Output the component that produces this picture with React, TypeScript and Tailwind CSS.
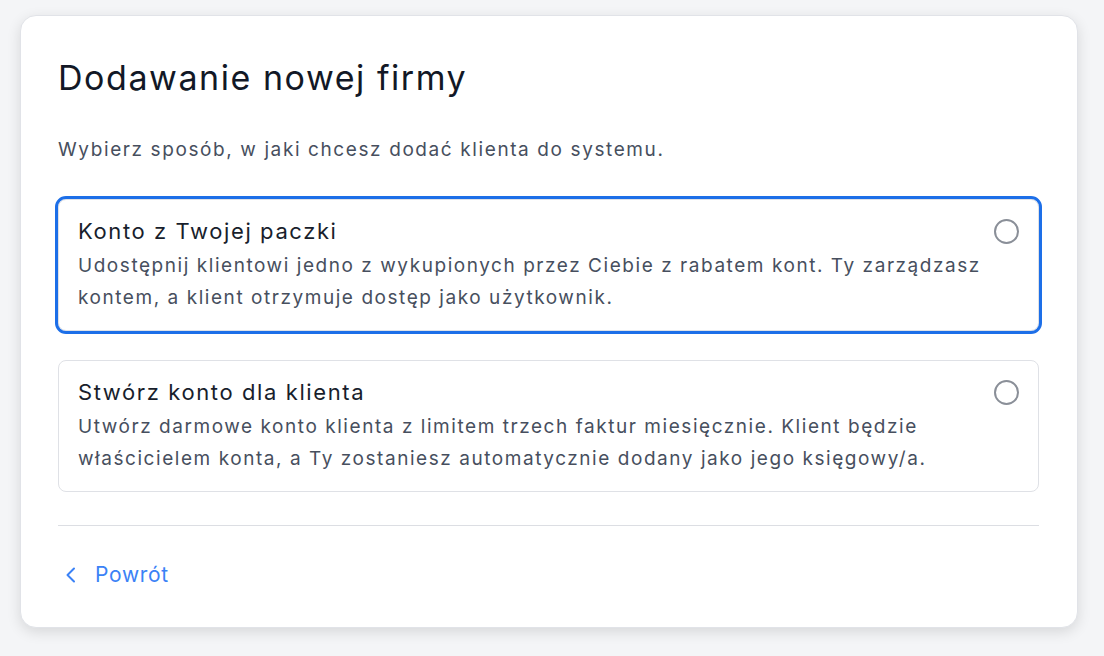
import React, { useState } from 'react';

const options = [
  {
    id: 'package',
    title: 'Konto z Twojej paczki',
    lines: [
      'Udostępnij klientowi jedno z wykupionych przez Ciebie z rabatem kont. Ty zarządzasz',
      'kontem, a klient otrzymuje dostęp jako użytkownik.',
    ],
  },
  {
    id: 'create',
    title: 'Stwórz konto dla klienta',
    lines: [
      'Utwórz darmowe konto klienta z limitem trzech faktur miesięcznie. Klient będzie',
      'właścicielem konta, a Ty zostaniesz automatycznie dodany jako jego księgowy/a.',
    ],
  },
];

const App = () => {
  const [selected, setSelected] = useState<string | null>(null);
  const focused = 'package';

  return (
    <div className="min-h-screen bg-[#f4f5f7] px-5 pt-[15px] font-['Inter',sans-serif]">
      <div className="w-[1058px] rounded-2xl border border-[#e1e3e8] bg-white pt-[42px] pr-[38px] pb-[38px] pl-[37px] shadow-[0_4px_14px_rgba(0,0,0,0.12)]">
        <h1 className="text-[34px] leading-[40px] font-normal tracking-[1.55px] text-[#121826]">
          Dodawanie nowej firmy
        </h1>
        <p className="mt-[38px] text-[19px] leading-[28px] tracking-[1.6px] text-[#474f5e]">
          Wybierz sposób, w jaki chcesz dodać klienta do systemu.
        </p>

        <div className="mt-[35px] flex flex-col gap-[29px]">
          {options.map((o) => (
            <button
              key={o.id}
              onClick={() => setSelected(o.id)}
              className={`flex h-[132px] items-start justify-between rounded-lg border border-[#dfe1e6] bg-white pt-[16px] pr-[19px] pl-[19px] text-left ${
                o.id === focused ? 'outline-[3px] outline-solid outline-[#1d6fe8]' : ''
              }`}
            >
              <div>
                <div className="text-[22px] leading-[30px] tracking-[1.6px] text-[#181e2c]">{o.title}</div>
                <div className="mt-[4px] text-[19px] leading-[32px] tracking-[1.55px] whitespace-nowrap text-[#474f5e]">
                  {o.lines.map((l) => (
                    <div key={l}>{l}</div>
                  ))}
                </div>
              </div>
              <span
                className={`mt-[3px] flex h-[25px] w-[25px] shrink-0 items-center justify-center rounded-full border-2 ${
                  selected === o.id ? 'border-[#1d6fe8]' : 'border-[#8a8f98]'
                }`}
              >
                {selected === o.id && <span className="h-[13px] w-[13px] rounded-full bg-[#1d6fe8]" />}
              </span>
            </button>
          ))}
        </div>

        <div className="mt-[33px] border-t border-[#dcdee3]" />

        <button className="mt-[35px] flex items-center gap-[19px] pl-[7px] text-[21px] leading-[28px] tracking-[0.7px] text-[#3b82f6]">
          <svg width="11" height="16" viewBox="0 0 11 16" fill="none">
            <path d="M9 1.5L2.5 8 9 14.5" stroke="currentColor" strokeWidth="2" strokeLinecap="round" strokeLinejoin="round" />
          </svg>
          Powrót
        </button>
      </div>
    </div>
  );
};

export default App;
